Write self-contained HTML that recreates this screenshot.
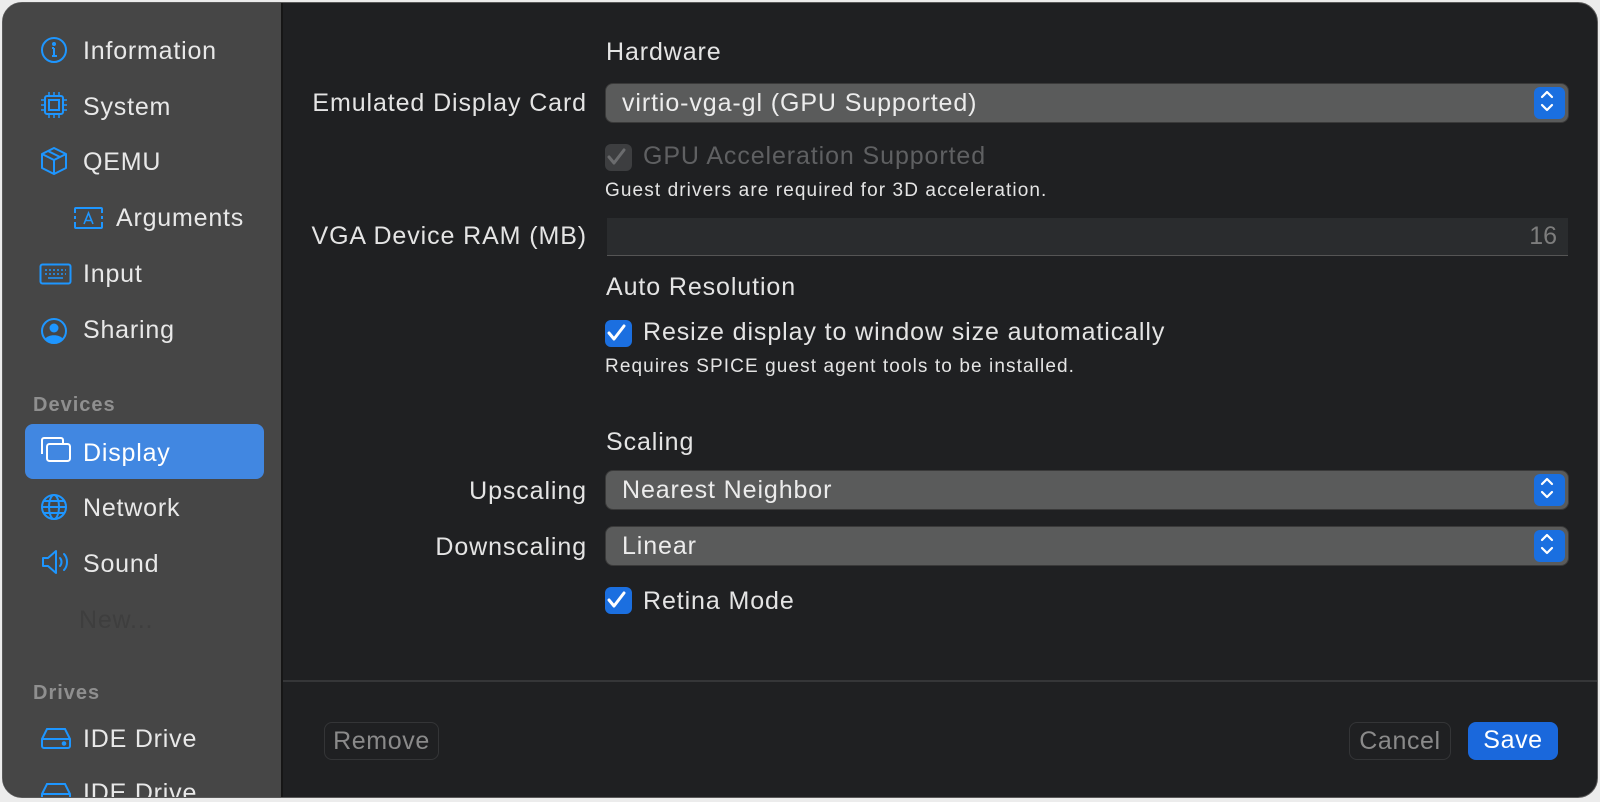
<!DOCTYPE html>
<html><head><meta charset="utf-8"><style>
*{margin:0;padding:0;box-sizing:border-box}
body{width:1600px;height:802px;background:#ececec;font-family:"Liberation Sans",sans-serif;position:relative;overflow:hidden}
.win{position:absolute;left:2px;top:2px;width:1596px;height:796px;border-radius:20px;background:#1f2022;overflow:hidden;border:1px solid #5a5a5a}
.side{position:absolute;left:0;top:0;width:280px;height:100%;background:#464646;border-right:2px solid #161616}
.a{position:absolute;white-space:nowrap}
.it{font-size:25px;letter-spacing:0.8px;color:#e8e8e8;line-height:30px}
.hd{font-size:20px;letter-spacing:1px;color:#8f8f8f;font-weight:bold}
.ic{position:absolute}
.lbl{font-size:25px;letter-spacing:0.9px;color:#e4e4e4;right:1010px;text-align:right}
.sec{font-size:25px;letter-spacing:0.9px;color:#e4e4e4;left:603px}
.pop{position:absolute;left:603px;width:962px;height:38px;background:#5a5b5b;border-radius:7px;box-shadow:0 0 0 1px #3a3a3a}
.pop span{position:absolute;left:16px;top:5px;font-size:25px;letter-spacing:0.9px;color:#ececec}
.pop i{position:absolute;right:3px;top:3px;width:31px;height:32px;background:#1a6fe0;border-radius:6px}
.cb{position:absolute;left:602px;width:27px;height:27px;border-radius:6px;background:#1b6fe0}
.cbt{font-size:25px;letter-spacing:0.9px;color:#e4e4e4;left:640px}
.sm{font-size:19px;letter-spacing:1.1px;color:#e4e4e4;left:602px}
.btn{position:absolute;height:38px;border-radius:8px;font-size:25px;letter-spacing:0.6px;text-align:center;line-height:37px}
</style></head><body>
<div class="win">
<div class="side">
<svg class="ic" style="left:36px;top:32px" width="30" height="30" viewBox="0 0 30 30" fill="none" stroke="#1e96ff" stroke-width="2"><circle cx="15" cy="15" r="12"/><path d="M15 13v8M13 21h5M13 13h2"/><circle cx="15" cy="9" r="1" fill="#1e96ff"/></svg>
<div class="a it" style="left:80px;top:33px">Information</div>
<svg class="ic" style="left:37px;top:88px" width="28" height="28" viewBox="0 0 28 28" fill="none" stroke="#1e96ff" stroke-width="2"><rect x="5" y="5" width="18" height="18" rx="2"/><rect x="9" y="9" width="10" height="10"/><path d="M9 1v4M14 1v4M19 1v4M9 23v4M14 23v4M19 23v4M1 9h4M1 14h4M1 19h4M23 9h4M23 14h4M23 19h4" stroke-width="1.5"/></svg>
<div class="a it" style="left:80px;top:89px">System</div>
<svg class="ic" style="left:37px;top:143px" width="28" height="30" viewBox="0 0 28 30" fill="none" stroke="#1e96ff" stroke-width="2" stroke-linejoin="round"><path d="M14 2L26 8v14L14 28 2 22V8z M2 8l12 6 12-6 M14 14v14 M8 5l12 6"/></svg>
<div class="a it" style="left:80px;top:144px">QEMU</div>
<svg class="ic" style="left:70px;top:203px" width="31" height="24" viewBox="0 0 31 24" fill="none" stroke="#1e96ff" stroke-width="2"><path d="M2 7V3a1 1 0 011-1h25a1 1 0 011 1v4M2 16v5a1 1 0 001 1h25a1 1 0 001-1v-5M2 10v3M29 10v3"/><path d="M11 18l4.5-11L20 18M12.5 14.5h6" stroke-width="1.6"/></svg>
<div class="a it" style="left:113px;top:200px">Arguments</div>
<svg class="ic" style="left:36px;top:260px" width="33" height="22" viewBox="0 0 33 22" fill="none" stroke="#1e96ff" stroke-width="2"><rect x="1.5" y="1.5" width="30" height="19" rx="2"/><path d="M6 7h2M10 7h2M14 7h2M18 7h2M22 7h2M26 7h1M6 11h2M10 11h2M14 11h2M18 11h2M22 11h2M26 11h1M9 15h15" stroke-width="1.5"/></svg>
<div class="a it" style="left:80px;top:256px">Input</div>
<svg class="ic" style="left:36px;top:313px" width="30" height="30" viewBox="0 0 30 30"><circle cx="15" cy="15" r="12" fill="none" stroke="#1e96ff" stroke-width="2"/><circle cx="15" cy="12" r="4.5" fill="#1e96ff"/><path d="M6 23c3-5 15-5 18 0c-4 5-14 5-18 0z" fill="#1e96ff"/></svg>
<div class="a it" style="left:80px;top:312px">Sharing</div>
<div class="a hd" style="left:30px;top:391px">Devices</div>
<div class="a" style="left:22px;top:421px;width:239px;height:55px;background:#4187e1;border-radius:8px"></div>
<svg class="ic" style="left:36px;top:433px" width="33" height="28" viewBox="0 0 33 28" fill="none" stroke="#fff" stroke-width="2"><path d="M3 18V4a2 2 0 012-2h17a2 2 0 012 2v3"/><rect x="8" y="8" width="23" height="17" rx="2.5"/></svg>
<div class="a it" style="left:80px;top:435px;color:#fff">Display</div>
<svg class="ic" style="left:37px;top:490px" width="28" height="28" viewBox="0 0 28 28" fill="none" stroke="#1e96ff" stroke-width="2"><circle cx="14" cy="14" r="12"/><ellipse cx="14" cy="14" rx="5" ry="12"/><path d="M2 14h24M4 8h20M4 20h20"/></svg>
<div class="a it" style="left:80px;top:490px">Network</div>
<svg class="ic" style="left:38px;top:546px" width="30" height="26" viewBox="0 0 30 26" fill="none" stroke="#1e96ff" stroke-width="2" stroke-linejoin="round"><path d="M2 9h5l8-7v22l-8-7H2z"/><path d="M19 9c2 2 2 6 0 8M23 5c4 4 4 12 0 16" stroke-linecap="round"/></svg>
<div class="a it" style="left:80px;top:546px">Sound</div>
<div class="a it" style="left:76px;top:602px;color:#3e3e3e">New...</div>
<div class="a hd" style="left:30px;top:679px">Drives</div>
<svg class="ic" style="left:37px;top:724px" width="32" height="22" viewBox="0 0 32 22" fill="none" stroke="#1e96ff" stroke-width="2"><path d="M2 12L7 2h18l5 10v7a2 2 0 01-2 2H4a2 2 0 01-2-2z M2 12h28"/><circle cx="24" cy="16.5" r="1.3" fill="#1e96ff"/></svg>
<div class="a it" style="left:80px;top:721px">IDE Drive</div>
<svg class="ic" style="left:37px;top:779px" width="32" height="22" viewBox="0 0 32 22" fill="none" stroke="#1e96ff" stroke-width="2"><path d="M2 12L7 2h18l5 10v7a2 2 0 01-2 2H4a2 2 0 01-2-2z M2 12h28"/></svg>
<div class="a it" style="left:80px;top:775px">IDE Drive</div>
</div>

<div class="a sec" style="top:35px">Hardware</div>
<div class="a lbl" style="top:86px">Emulated Display Card</div>
<div class="pop" style="top:81px"><span>virtio-vga-gl (GPU Supported)</span><i></i></div>
<div class="cb" style="top:141px;background:#3d3e40"></div>
<div class="a cbt" style="top:139px;color:#5f6062">GPU Acceleration Supported</div>
<div class="a sm" style="top:177px">Guest drivers are required for 3D acceleration.</div>
<div class="a lbl" style="top:219px">VGA Device RAM (MB)</div>
<div class="a" style="left:604px;top:215px;width:961px;height:38px;background:#2a2c2e;border-bottom:1px solid #555"></div>
<div class="a" style="right:40px;top:219px;font-size:25px;color:#7d7d7d">16</div>
<div class="a sec" style="top:270px">Auto Resolution</div>
<div class="cb" style="top:317px"></div>
<div class="a cbt" style="top:315px">Resize display to window size automatically</div>
<div class="a sm" style="top:353px">Requires SPICE guest agent tools to be installed.</div>
<div class="a sec" style="top:425px">Scaling</div>
<div class="a lbl" style="top:474px">Upscaling</div>
<div class="pop" style="top:468px"><span>Nearest Neighbor</span><i></i></div>
<div class="a lbl" style="top:530px">Downscaling</div>
<div class="pop" style="top:524px"><span>Linear</span><i></i></div>
<div class="cb" style="top:584px"></div>
<div class="a cbt" style="top:584px">Retina Mode</div>

<div class="a" style="left:280px;top:677px;width:1320px;height:2px;background:#353638"></div>
<div class="btn" style="left:321px;top:719px;width:115px;border:1px solid #343537;color:#8a8a8a">Remove</div>
<div class="btn" style="left:1346px;top:719px;width:102px;border:1px solid #343537;color:#8a8a8a">Cancel</div>
<div class="btn" style="left:1465px;top:719px;width:90px;background:#1a68dc;color:#fff">Save</div>
</div>
<svg style="position:absolute;left:0;top:0" width="1600" height="802">
<g fill="none" stroke="#fff" stroke-width="2.2" stroke-linecap="round" stroke-linejoin="round">
<path d="M1542 97l5-5 5 5M1542 105l5 5 5-5"/>
<path d="M1542 484l5-5 5 5M1542 492l5 5 5-5"/>
<path d="M1542 540l5-5 5 5M1542 548l5 5 5-5"/>
<path d="M609 333l5 6 10-13" stroke-width="3"/>
<path d="M609 600l5 6 10-13" stroke-width="3"/>
<path d="M609 157l5 6 10-13" stroke="#6b6c6e" stroke-width="3"/>
</g></svg>
</body></html>
